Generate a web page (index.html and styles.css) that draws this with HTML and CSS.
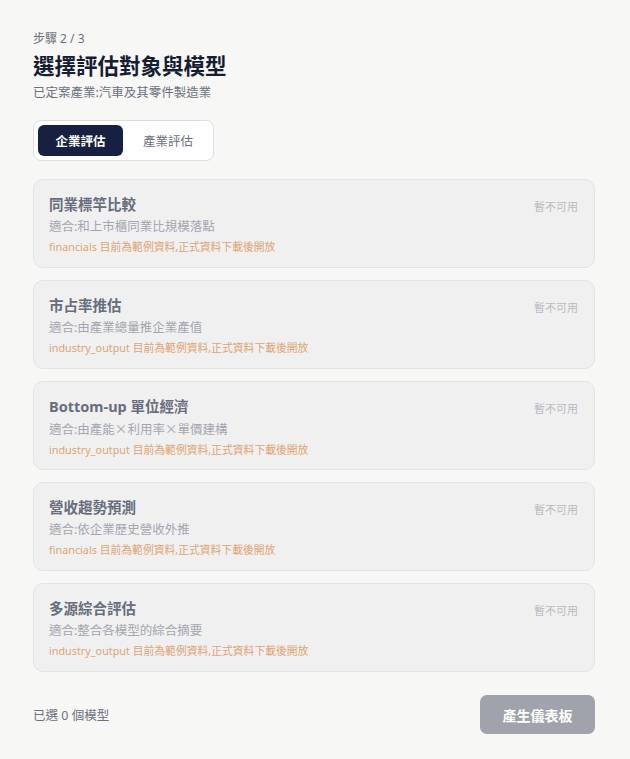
FILE: index.html
```html
<!DOCTYPE html>
<html lang="zh-Hant">
<head>
<meta charset="utf-8">
<link rel="stylesheet" href="styles.css">
</head>
<body>
<div class="page">
  <div class="step">步驟 2 / 3</div>
  <h1 class="title">選擇評估對象與模型</h1>
  <div class="subtitle">已定案產業:汽車及其零件製造業</div>

  <div class="tabs">
    <div class="tab active">企業評估</div>
    <div class="tab">產業評估</div>
  </div>

  <div class="cards">
    <div class="card">
      <div class="card-body">
        <div class="card-title">同業標竿比較</div>
        <div class="card-desc">適合:和上市櫃同業比規模落點</div>
        <div class="card-note">financials 目前為範例資料,正式資料下載後開放</div>
      </div>
      <div class="card-status">暫不可用</div>
    </div>
    <div class="card">
      <div class="card-body">
        <div class="card-title">市占率推估</div>
        <div class="card-desc">適合:由產業總量推企業產值</div>
        <div class="card-note">industry_output 目前為範例資料,正式資料下載後開放</div>
      </div>
      <div class="card-status">暫不可用</div>
    </div>
    <div class="card">
      <div class="card-body">
        <div class="card-title">Bottom-up 單位經濟</div>
        <div class="card-desc">適合:由產能<span class="cjk">×</span>利用率<span class="cjk">×</span>單價建構</div>
        <div class="card-note">industry_output 目前為範例資料,正式資料下載後開放</div>
      </div>
      <div class="card-status">暫不可用</div>
    </div>
    <div class="card">
      <div class="card-body">
        <div class="card-title">營收趨勢預測</div>
        <div class="card-desc">適合:依企業歷史營收外推</div>
        <div class="card-note">financials 目前為範例資料,正式資料下載後開放</div>
      </div>
      <div class="card-status">暫不可用</div>
    </div>
    <div class="card">
      <div class="card-body">
        <div class="card-title">多源綜合評估</div>
        <div class="card-desc">適合:整合各模型的綜合摘要</div>
        <div class="card-note">industry_output 目前為範例資料,正式資料下載後開放</div>
      </div>
      <div class="card-status">暫不可用</div>
    </div>
  </div>

  <div class="footer">
    <div class="count">已選 0 個模型</div>
    <button class="primary" disabled>產生儀表板</button>
  </div>
</div>
</body>
</html>
```

FILE: styles.css
```css
* { box-sizing: border-box; }
html, body {
  margin: 0;
  padding: 0;
  background: #f7f7f5;
}
body {
  font-family: "Noto Sans", "Noto Sans CJK TC", sans-serif;
  color: #1a2038;
}
.page {
  padding: 30px 35px 0 33px;
}
.step {
  font-size: 12px;
  line-height: 18px;
  color: #6b7080;
}
.title {
  margin: 3px 0 0 0;
  font-size: 21.5px;
  line-height: 30px;
  font-weight: 700;
  color: #161d33;
}
.subtitle {
  margin-top: 3px;
  font-size: 12.5px;
  line-height: 18px;
  color: #6b7080;
}
.tabs {
  margin-top: 18px;
  display: inline-flex;
  gap: 4px;
  padding: 4px;
  background: #ffffff;
  border: 1px solid #dcdde2;
  border-radius: 8px;
}
.tab {
  width: 82px;
  height: 31px;
  display: flex;
  align-items: center;
  justify-content: center;
  font-size: 12.5px;
  color: #6b7080;
  border-radius: 6px;
}
.tab.active {
  width: 85px;
  background: #172040;
  color: #ffffff;
  font-weight: 700;
}
.cards {
  margin-top: 18px;
  display: flex;
  flex-direction: column;
  gap: 12px;
}
.card {
  height: 89px;
  display: flex;
  justify-content: space-between;
  align-items: flex-start;
  padding: 14px 16px 0 15px;
  background: #f0f0f1;
  border: 1px solid #e4e4e6;
  border-radius: 10px;
}
.card-title {
  font-size: 14.5px;
  line-height: 20px;
  font-weight: 700;
  color: #676d7b;
}
.card-desc {
  margin-top: 3px;
  font-size: 12.5px;
  line-height: 20px;
  color: #a3a6ae;
}
.cjk {
  font-family: "Noto Sans CJK TC", sans-serif;
}
.card-note {
  margin-top: 1px;
  font-size: 10.8px;
  line-height: 18px;
  color: #e0a472;
}
.card-status {
  margin-top: 5px;
  font-size: 11px;
  line-height: 16px;
  color: #b9bbc1;
}
.footer {
  margin-top: 23px;
  display: flex;
  justify-content: space-between;
  align-items: center;
}
.count {
  font-size: 12.5px;
  color: #6b7080;
}
.primary {
  width: 115px;
  height: 39px;
  border: none;
  border-radius: 7px;
  background: #a0a3ac;
  color: #ffffff;
  font-family: "Noto Sans", "Noto Sans CJK TC", sans-serif;
  font-size: 14px;
  font-weight: 700;
}
```
